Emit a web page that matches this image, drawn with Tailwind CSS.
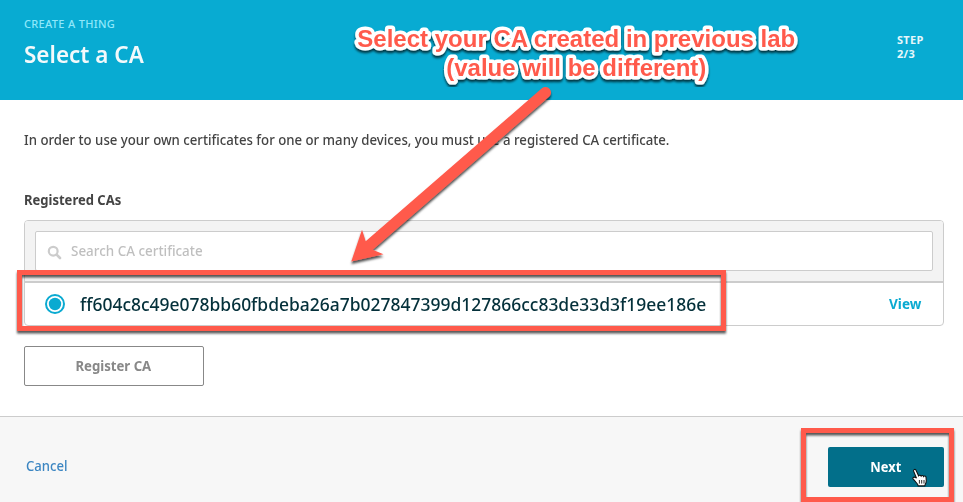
<!DOCTYPE html>
<html lang="en">
<head>
<meta charset="utf-8">
<title>Select a CA</title>
<script src="https://cdn.jsdelivr.net/npm/@tailwindcss/browser@4"></script>
</head>
<body class="bg-white">
<div class="relative flex h-[502px] w-[963px] flex-col overflow-hidden whitespace-nowrap font-['Noto_Sans','Open_Sans',sans-serif] text-sm leading-5 text-[#444]">
  <header class="flex h-[100px] shrink-0 justify-between bg-[#08abd2] pl-6 pr-[39px]">
    <div class="pt-4">
      <p class="text-[11px] leading-4 font-medium tracking-[0.33px] text-[#8fe8fb]">CREATE A THING</p>
      <h1 class="mt-[6px] w-fit origin-left scale-x-[.937] text-2xl leading-8 font-semibold text-[#f3f9fb]">Select a CA</h1>
    </div>
    <div class="w-[27px] pt-[33px] text-[11px] leading-[14px] font-bold tracking-[0.3px] text-[#e6f7fb]">
      <p>STEP</p>
      <p>2/3</p>
    </div>
  </header>
  <main class="h-[316px] shrink-0 px-6 pt-[30px]">
    <p class="w-fit origin-left scale-x-[.943] font-medium">In order to use your own certificates for one or many devices, you must use a registered CA certificate.</p>
    <h2 class="mt-10 w-fit origin-left scale-x-[.93] font-bold">Registered CAs</h2>
    <section class="mt-[10px] h-[106px] w-[920px] overflow-hidden rounded border border-[#ccc]">
      <div class="h-[62px] border-b-2 border-[#ccc] bg-[#f3f3f3] p-[10px]">
        <div class="flex h-10 items-center rounded-xs border border-[#ccc] bg-white pl-[11px]">
          <svg class="mt-[2px] size-[15px]" viewBox="0 0 15 15" fill="none" stroke="#ccc"><circle cx="6.2" cy="6.2" r="4.4" stroke-width="2.2"/><path d="M9.6 9.6l3.4 3.4" stroke-width="2.6" stroke-linecap="round"/></svg>
          <span class="ml-[9px] origin-left scale-x-[.958] font-medium text-[#bfbfbf]">Search CA certificate</span>
        </div>
      </div>
      <div class="flex h-[42px] items-center pr-[22px] pl-5">
        <svg class="size-5" viewBox="0 0 20 20"><circle cx="10" cy="10" r="9" fill="#fff" stroke="#0aaad1" stroke-width="2"/><circle cx="10" cy="10" r="6.2" fill="#0aaad1"/></svg>
        <span class="ml-[15px] w-fit origin-left scale-x-[.97] text-lg leading-6 font-medium text-[#04303a]">ff604c8c49e078bb60fbdeba26a7b027847399d127866cc83de33d3f19ee186e</span>
        <a class="ml-auto origin-right scale-x-[.97] font-bold text-[#0aaad1]">View</a>
      </div>
    </section>
    <button class="mt-5 flex h-10 w-[180px] items-center justify-center rounded-xs border border-[#888] bg-white pr-[2px] font-bold text-[#888]"><span class="scale-x-[.94]">Register CA</span></button>
  </main>
  <footer class="flex grow items-start justify-between border-t border-[#ccc] bg-[#f7f7f7] pt-[30px] pr-[19px] pl-[25.5px]">
    <a class="mt-[9px] origin-left scale-x-[.935] font-medium text-[#3c86c2]">Cancel</a>
    <button class="flex h-10 w-[116px] items-center justify-center rounded-xs bg-[#026f8a] font-bold text-white"><span class="scale-x-[.92]">Next</span></button>
  </footer>

  <!-- callouts and pointer over the page -->
  <svg class="absolute inset-0 h-[502px] w-[963px]" viewBox="0 0 963 502">
    <defs>
      <filter id="sh" x="-10%" y="-10%" width="120%" height="120%"><feDropShadow dx="0" dy="2.5" stdDeviation="1" flood-color="#000" flood-opacity=".7"/></filter>
      <filter id="bx" filterUnits="userSpaceOnUse" x="0" y="250" width="963" height="252"><feDropShadow dx="0" dy="2.5" stdDeviation=".8" flood-color="#000" flood-opacity=".65"/></filter>
    </defs>
    <rect x="19.5" y="272.5" width="704" height="56" fill="none" stroke="#ff5a4c" stroke-width="5" filter="url(#bx)"/>
    <rect x="803.5" y="430.5" width="148" height="69" fill="none" stroke="#ff5a4c" stroke-width="5" filter="url(#bx)"/>
    <path d="M351.3 261.5L362 229.7L365.7 241.3L541.9 88.3A5.5 5.5 0 0 1 549.1 96.7L372.7 249.7L383.5 254.3Z" fill="#ff5a4c" filter="url(#sh)"/>
    <g filter="url(#sh)" font-family="'Liberation Sans', Arial, sans-serif" font-size="24" font-weight="700" text-anchor="middle">
      <g fill="#ff5a4c" stroke="#fff" stroke-width="7" stroke-linejoin="round" paint-order="stroke">
        <text x="576.3" y="47">Select your CA created in previous lab</text>
        <text x="576.3" y="76">(value will be different)</text>
      </g>
    </g>
    <path d="M915.8 469.8c-1-.9-2.6 0-2.2 1.3l2.9 7c-1-.8-2.6-1.3-3.4-.5-.8.8.1 1.7.9 2.4l3 3.5c.7.8 1 1.3 1.2 2.4h6.6c.1-1.3 1.6-2.7 1.5-5.4l-.3-3.4c-.2-1.3-1.7-1.4-2.4-.6-.3-1.2-1.9-1.4-2.5-.4-.5-1.1-1.9-1.2-2.5-.3z" fill="#fff" stroke="#111" stroke-width="1.1"/>
    <path d="M919.4 480v3.6M921.7 480v3.6M924 480v3.6" stroke="#111" stroke-width=".9"/>
  </svg>
</div>
</body>
</html>
